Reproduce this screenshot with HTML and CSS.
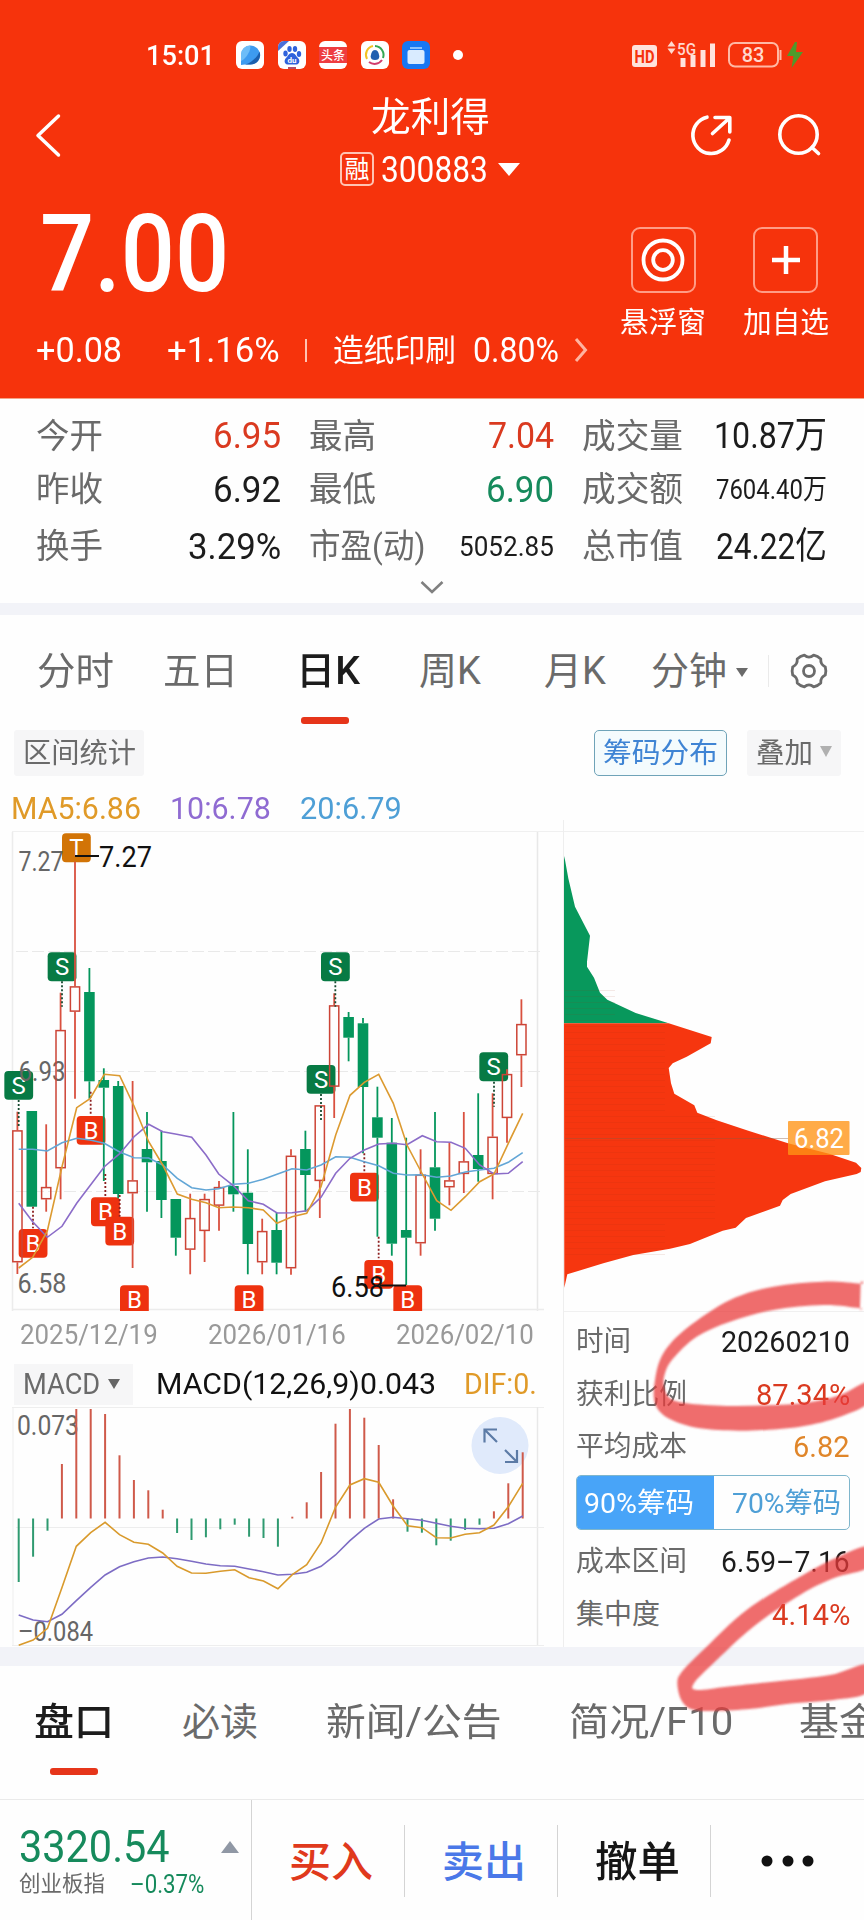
FILE: index.html
```html
<!DOCTYPE html>
<html lang="zh-CN">
<head>
<meta charset="utf-8">
<title>龙利得 300883</title>
<link rel="stylesheet" href="styles.css">
</head>
<body>
<header class="head">
  <div class="status">
    <span class="fit s-time" data-w="69">15:01</span>
    <div class="apps">
      <svg width="28" height="28" viewBox="0 0 28 28"><rect width="28" height="28" rx="6" fill="#fff"/><path d="M5 24V14a9.5 9.5 0 1 1 9.500 9.500H9z" fill="#3d9bf0"/><path d="M9 23.500C16 22 22 15 23.500 10.500A9.500 9.500 0 0 1 14.500 23.500z" fill="#1b5fae"/><path d="M5 20V13a9 9 0 0 1 9-8.500C16 8 10 18 5 20z" fill="#6dbdf8"/></svg>
      <svg width="28" height="28" viewBox="0 0 28 28"><rect width="28" height="28" rx="6" fill="#fff"/><path d="M0 10V6a6 6 0 0 1 6-6h5z" fill="#4a6fd8"/><g fill="#2f62dc"><ellipse cx="7.500" cy="12.500" rx="2.200" ry="3"/><ellipse cx="11.500" cy="8" rx="2.200" ry="3"/><ellipse cx="17" cy="8" rx="2.200" ry="3"/><ellipse cx="21" cy="13" rx="2.200" ry="3"/><path d="M14 12c3 0 4 3 6 5s2 6-1.500 6.500h-9C6 23 6 19 8 17s3-5 6-5z"/></g><text x="14" y="22" class="ic-du">du</text><path d="M10 26h8v2h-8z" fill="#b0506a"/></svg>
      <svg width="28" height="28" viewBox="0 0 28 28"><rect width="28" height="28" rx="6" fill="#fff"/><path d="M0 6h28v16H0z" fill="#ee3d40"/><text x="14" y="18.500" class="ic-tt">头条</text></svg>
      <svg width="28" height="28" viewBox="0 0 28 28"><rect width="28" height="28" rx="6" fill="#fff"/><g fill="none" stroke-width="2"><path d="M6 18a9 9 0 0 1 6-13" stroke="#f2c324"/><path d="M14 5a9 9 0 0 1 8 12" stroke="#35a853"/><path d="M21 19a9 9 0 0 1-13 2" stroke="#d23c6c"/></g><path d="M14 9c3 0 3.800 3 4.300 6.500 0 2.500-1.500 3.500-4.300 3.500s-4.300-1-4.300-3.500C10.200 12 11 9 14 9z" fill="#1f5fb0"/></svg>
      <svg width="28" height="28" viewBox="0 0 28 28"><rect width="28" height="28" rx="6" fill="#1877f2"/><path d="M8 6h12v2H8z" fill="#8cc0fb"/><rect x="5.500" y="9" width="17" height="14" rx="2" fill="#d9ebff"/></svg>
    </div>
    <i class="dot"></i>
    <svg class="signal" width="180" height="30" viewBox="630 40 180 30">
      <rect x="632" y="45" width="25" height="22" rx="3" fill="#ffe3dc"/><text x="644.500" y="62.500" class="ic-hd" textLength="20" lengthAdjust="spacingAndGlyphs">HD</text>
      <path d="M671.500 41l4 5.500h-8zM671.500 54l4-5.500h-8z" fill="#ffd9cf"/><text x="677" y="54.500" class="ic-5g" textLength="19" lengthAdjust="spacingAndGlyphs">5G</text>
      <path d="M680.500 58h5v9h-5zM690.500 55h5v12h-5zM700.500 50h5v17h-5zM710 43.500h5v23.500h-5z" fill="#ffe3dc"/>
      <rect x="729" y="43" width="49" height="23.500" rx="6" fill="none" stroke="#ffb9a5" stroke-width="2"/><path d="M780.500 50v10" stroke="#ffb9a5" stroke-width="2"/>
      <text x="753" y="62" class="ic-bat">83</text>
      <path d="M795 42l-8 14h6.500l-2 12L803 52h-7l1-10z" fill="#4d9a2c"/>
    </svg>
  </div>

  <div class="nav">
    <svg width="30" height="50" viewBox="33 110 30 50" fill="none" stroke="#fff" stroke-width="3.500" stroke-linecap="round" stroke-linejoin="round"><path d="M58.500 116L38 135.500 58.500 155"/></svg>
    <div class="title">
      <div class="name"><span class="fit" data-w="119">龙利得</span></div>
      <div class="code"><b class="rong">融</b><span class="fit" data-w="107">300883</span><i class="tri"></i></div>
    </div>
    <svg width="140" height="50" viewBox="685 110 140 50" fill="none" stroke="#fff" stroke-width="3.600" stroke-linecap="round" stroke-linejoin="round"><path d="M707 117.200A18.400 18.400 0 1 0 729 140"/><path d="M712.500 133.500l17-15.500M715 117.500h14.800v14.500"/><circle cx="798.500" cy="134.500" r="18.700"/><path d="M812 147.500l6.500 6"/></svg>
  </div>

  <div class="quote">
    <div>
      <div class="price"><span class="fit" data-w="189">7.00</span></div>
      <div class="change">
        <span class="fit n35" data-w="86">+0.08</span>
        <span class="fit n35" data-w="113">+1.16%</span>
        <i class="bar"></i>
        <span class="fit n31" data-w="123">造纸印刷</span>
        <span class="fit n35" data-w="86">0.80%</span>
        <svg width="16" height="26" viewBox="0 0 16 26" fill="none" stroke="#ffb3a0" stroke-width="3"><path d="M2 2l9.500 11L2 24"/></svg>
      </div>
    </div>
    <div class="act">
      <div class="box"><svg width="44" height="44" viewBox="0 0 44 44" fill="none" stroke="#fff" stroke-width="3.800"><circle cx="22" cy="22" r="19.500"/><circle cx="22" cy="22" r="9.800"/></svg></div>
      <span class="fit" data-w="86">悬浮窗</span>
    </div>
    <div class="act">
      <div class="box"><svg width="44" height="44" viewBox="0 0 44 44" stroke="#fff" stroke-width="4.500"><path d="M22 8v28M8 22h28"/></svg></div>
      <span class="fit" data-w="86">加自选</span>
    </div>
  </div>
</header>

<section class="stats">
  <div class="srow r1">
    <p><span class="fit k" data-w="67">今开</span><span class="fit v red" data-w="68">6.95</span></p>
    <p><span class="fit k" data-w="67">最高</span><span class="fit v red" data-w="66">7.04</span></p>
    <p><span class="fit k" data-w="101">成交量</span><span class="fit v" data-w="113">10.87万</span></p>
  </div>
  <div class="srow r2">
    <p><span class="fit k" data-w="67">昨收</span><span class="fit v" data-w="68">6.92</span></p>
    <p><span class="fit k" data-w="67">最低</span><span class="fit v green" data-w="68">6.90</span></p>
    <p><span class="fit k" data-w="101">成交额</span><span class="fit v sm" data-w="111">7604.40万</span></p>
  </div>
  <div class="srow r3">
    <p><span class="fit k" data-w="67">换手</span><span class="fit v" data-w="93">3.29%</span></p>
    <p><span class="fit k" data-w="116">市盈(动)</span><span class="fit v sm" data-w="95">5052.85</span></p>
    <p><span class="fit k" data-w="101">总市值</span><span class="fit v" data-w="111">24.22亿</span></p>
  </div>
  <div class="more"><svg width="26" height="16" viewBox="0 0 26 16" fill="none" stroke="#808080" stroke-width="2.600"><path d="M2.500 2L13 12 23.500 2"/></svg></div>
</section>

<nav class="ktabs">
  <span class="fit" data-w="77">分时</span>
  <span class="fit" data-w="75">五日</span>
  <span class="on"><span class="fit" data-w="64">日K</span></span>
  <span class="fit" data-w="62">周K</span>
  <span class="fit" data-w="62">月K</span>
  <span class="fit" data-w="76">分钟</span>
  <i class="tri grey"></i>
  <i class="vline"></i>
  <svg width="38" height="38" viewBox="0 0 38 38" fill="none" stroke="#6b6b6b" stroke-width="2.800" stroke-linejoin="round"><path d="M35.300 14.900Q36.400 19 35.300 23.100Q30.200 25.500 30.800 31Q27.800 34 23.700 34.800Q19 31 14.300 34.800Q10.200 34 7.200 31Q7.800 25.500 2.700 23.100Q1.600 19 2.700 14.900Q7.800 12.500 7.200 7Q10.200 4 14.300 3.200Q19 7 23.700 3.200Q27.800 4 30.800 7Q30.200 12.500 35.300 14.900Z"/><circle cx="19" cy="19" r="5.500"/></svg>
</nav>

<div class="tools">
  <span class="chip"><span class="fit" data-w="113">区间统计</span></span>
  <span class="chip blue"><span class="fit" data-w="115">筹码分布</span></span>
  <span class="chip add"><span class="fit" data-w="57">叠加</span><i class="tri pale"></i></span>
</div>
<div class="ma">
  <span class="fit m5" data-w="130">MA5:6.86</span>
  <span class="fit m10" data-w="101">10:6.78</span>
  <span class="fit m20" data-w="102">20:6.79</span>
</div>

<main class="charts">
  <div class="left">
    <svg id="kline" width="564" height="500" viewBox="0 820 564 500"></svg>
    <div class="dates"><span class="fit" data-w="138">2025/12/19</span><span class="fit" data-w="138">2026/01/16</span><span class="fit" data-w="138">2026/02/10</span></div>
    <div class="mhead"><span class="pick"><span class="fit" data-w="77">MACD</span><i class="tri dark"></i></span><span class="fit blk" data-w="280">MACD(12,26,9)0.043</span><span class="fit m5" data-w="73">DIF:0.</span></div>
    <svg id="macd" width="564" height="242" viewBox="0 1405 564 242"></svg>
  </div>
  <div class="right">
    <svg id="chips" width="300" height="495" viewBox="564 820 300 495"></svg>
    <div class="info">
      <p><span class="fit" data-w="55">时间</span><span class="fit ink" data-w="129">20260210</span></p>
      <p><span class="fit" data-w="111">获利比例</span><span class="fit red" data-w="94">87.34%</span></p>
      <p><span class="fit" data-w="111">平均成本</span><span class="fit gold" data-w="57">6.82</span></p>
      <div class="seg"><b><span class="fit" data-w="110">90%筹码</span></b><b><span class="fit" data-w="109">70%筹码</span></b></div>
      <p><span class="fit" data-w="111">成本区间</span><span class="fit ink" data-w="129">6.59–7.16</span></p>
      <p><span class="fit" data-w="84">集中度</span><span class="fit red" data-w="78">4.14%</span></p>
    </div>
  </div>
</main>

<nav class="btabs">
  <span class="on"><span class="fit" data-w="80">盘口</span></span>
  <span class="fit" data-w="76">必读</span>
  <span class="fit" data-w="176">新闻/公告</span>
  <span class="fit" data-w="164">简况/F10</span>
  <span class="fit" data-w="80">基金</span>
</nav>

<footer class="foot">
  <div class="index">
    <div class="top"><span class="fit" data-w="151">3320.54</span><i class="tri up"></i></div>
    <div class="sub"><span class="fit" data-w="86">创业板指</span><span class="fit green" data-w="74">–0.37%</span></div>
  </div>
  <div class="btn red"><span class="fit" data-w="84">买入</span></div>
  <div class="btn sell"><span class="fit" data-w="84">卖出</span></div>
  <div class="btn"><span class="fit" data-w="85">撤单</span></div>
  <div class="btn dots"><svg width="54" height="12" viewBox="0 0 54 12" fill="#111"><circle cx="6" cy="6" r="5.500"/><circle cx="27" cy="6" r="5.500"/><circle cx="47" cy="6" r="5.500"/></svg></div>
</footer>

<svg id="marks" class="marks" width="864" height="450" viewBox="0 1270 864 450"></svg>
<script src="app.js"></script>
</body>
</html>
```
FILE: styles.css
```css
* { box-sizing: border-box; }
body { margin: 0; width: 864px; height: 1920px; overflow: hidden; position: relative; background: #fefefe; color: #6a6a6a; font-family: Roboto, "Noto Sans CJK SC", sans-serif; line-height: 1; }
p { margin: 0; }
svg { display: block; flex: none; }
.fit { display: inline-block; white-space: nowrap; flex: none; }
.fit > span { display: inline-block; transform-origin: 0 50%; }
.tri { width: 0; height: 0; border: 11px solid transparent; border-top: 13px solid #fff; border-bottom: 0; }
.red { color: #da3a20; }
.green { color: #168a5c; }
.ink { color: #1c1c1c; }
.gold { color: #e0862a; }

.head { height: 399px; background: #f6330c; color: #fff; border-bottom: 1px solid #f4a488; }
.status { height: 75px; padding: 35px 0 0 146px; display: flex; align-items: center; }
.s-time { font-size: 28px; font-weight: 500; padding-top: 2px; }
.apps { display: flex; gap: 13.500px; margin-left: 21px; }
.dot { width: 10px; height: 10px; border-radius: 5px; background: #fff; margin-left: 23px; }
.signal { margin-left: 167px; }
.ic-du { font: 700 8px Roboto; fill: #fff; text-anchor: middle; }
.ic-tt { font: 500 12px "Noto Sans CJK SC"; fill: #fff; text-anchor: middle; }
.ic-hd { font: 700 18px Roboto; fill: #f6330c; text-anchor: middle; }
.ic-5g { font: 500 17px Roboto; fill: #ffd9cf; }
.ic-bat { font: 500 20px Roboto; fill: #ffd9cf; text-anchor: middle; }

.nav { height: 120px; padding: 0 39px 0 33px; display: grid; grid-template-columns: 30px 1fr 140px; align-items: center; }
.title { height: 120px; padding: 23px 0 0 112px; text-align: center; }
.name { font-size: 40px; height: 40px; padding-left: 1px; }
.code { margin-top: 14px; height: 34px; display: flex; align-items: center; justify-content: center; font-size: 37px; }
.rong { width: 34px; height: 34px; border: 2px solid #ffc3b3; border-radius: 5px; font-size: 25px; line-height: 31px; font-weight: 400; margin-right: 7px; }
.code .tri { margin-left: 10px; }

.quote { height: 203px; display: grid; grid-template-columns: 609px 108px 137px; }
.price { margin: 22px 0 0 40px; height: 76px; font-size: 107px; line-height: 76px; font-weight: 500; }
.change { margin-top: 37px; height: 40px; padding-left: 36px; display: flex; align-items: center; }
.n35 { font-size: 35px; }
.n31 { font-size: 31px; }
.change > :nth-child(2) { margin-left: 45px; }
.bar { width: 2px; height: 23px; background: #ffc3b3; margin-left: 25px; }
.change > :nth-child(4) { margin-left: 26px; }
.change > :nth-child(5) { margin-left: 17px; }
.change > svg { margin-left: 15px; }
.act { padding-top: 32px; display: flex; flex-direction: column; align-items: center; font-size: 29px; }
.box { width: 65px; height: 66px; border: 2px solid #ff9c86; border-radius: 9px; display: flex; align-items: center; justify-content: center; margin-bottom: 16px; }

.stats { height: 204px; padding: 9px 37px 0 36px; background: #fefefe; }
.srow { display: grid; grid-template-columns: repeat(3, 245px); gap: 28px; }
.srow p { display: flex; justify-content: space-between; align-items: center; }
.r1 { height: 55px; }
.r2 { height: 52px; }
.r3 { height: 62px; }
.k { font-size: 34px; }
.v { font-size: 37px; }
.v:not(.red):not(.green) { color: #1c1c1c; }
.v.sm { font-size: 28px; padding-top: 2px; }
.more { height: 26px; padding-top: 3px; display: flex; justify-content: center; }

.ktabs { height: 127px; border-top: 12px solid #f2f3f8; padding: 0 0 4px 37px; display: grid; grid-template-columns: 126px 133px 123px 125px 107px 85px 32px 22px 1fr; align-items: center; font-size: 38px; }
.on { color: #1c1c1c; font-weight: 500; position: relative; display: block; }
.on::after { content: ""; position: absolute; left: 5px; top: 65px; width: 48px; height: 7px; border-radius: 3px; background: #e6351a; }
.tri.grey { border-width: 9px 6px 0; border-top-color: #6a6a6a; margin-top: 4px; }
.vline { width: 1px; height: 32px; background: #eaeaea; }

.tools { height: 46px; padding-left: 14px; display: flex; font-size: 28px; }
.chip { height: 46px; width: 130px; padding-top: 1px; background: #f6f6f7; display: flex; align-items: center; justify-content: center; border-radius: 3px; }
.blue { width: 133px; margin-left: 450px; color: #3f84d4; background: #f4fbfd; border: 1.500px solid #6fa3b8; border-radius: 5px; }
.add { width: 94px; margin-left: 20px; }
.tri.pale { border-width: 11px 6.500px 0; border-top-color: #b0b0b0; margin-left: 7px; margin-top: -4px; }
.ma { height: 44px; padding: 20px 0 0 11px; display: flex; align-items: center; font-size: 31px; gap: 29px; }
.m5 { color: #e09a28; }
.m10 { color: #8f6bd2; }
.m20 { color: #4e9fd6; }

.charts { display: grid; grid-template-columns: 563px 301px; height: 827px; }
.right { border-left: 1px solid #eee; }
.dates { height: 30px; padding: 1px 0 0 20px; display: flex; align-items: center; gap: 50px; font-size: 27px; color: #999; }
.mhead { height: 45px; margin-top: 10px; padding: 3px 0 0 14px; display: flex; align-items: center; font-size: 29px; }
.pick { width: 119px; height: 41px; background: #f6f6f7; display: flex; align-items: center; padding-left: 9px; }
.tri.dark { border-width: 10px 6.500px 0; border-top-color: #666; margin-left: 8px; }
.mhead > .blk { color: #111; margin-left: 23px; }
.mhead > .m5 { margin-left: 28px; }
.axis { font-size: 27px; fill: #666; }
.lead { font-size: 29px; fill: #111; }
.sig { font-size: 24px; fill: #fff; text-anchor: middle; }
.avg { font-size: 28px; fill: #fff; }

.info { padding: 1px 14px 0 12px; font-size: 28px; }
.info p { height: 53px; display: flex; align-items: center; justify-content: space-between; }
.info .ink, .info .red, .info .gold { font-size: 30px; }
.info p:first-child, .info p:nth-child(3) { height: 52px; }
.seg { margin: 2px 0 5px; height: 55px; border: 1px solid #7fb6cc; border-radius: 5px; overflow: hidden; display: grid; grid-template-columns: 137px 1fr; color: #4e9fd6; }
.seg b { display: flex; align-items: center; justify-content: center; font-weight: 400; padding: 2px 0 0 10px; }
.seg b:first-child { background: #48a4f8; color: #fff; padding: 2px 13px 0 0; }

.btabs { height: 152px; border-top: 19px solid #f2f3f8; padding: 0 0 22px 34px; display: grid; grid-template-columns: 148px 144px 243px 230px 80px; align-items: center; font-size: 38px; overflow: hidden; }
.btabs .on::after { left: 16px; top: 65px; }

.foot { height: 121px; border-top: 1px solid #eaeaea; display: grid; grid-template-columns: 252px 153px 153px 153px 153px; }
.index { border-right: 1px solid #d4d4d4; padding-left: 19px; }
.top { height: 34px; margin-top: 30px; font-size: 45px; line-height: 34px; color: #168a5c; display: flex; align-items: center; }
.tri.up { border: 9px solid transparent; border-bottom: 12px solid #9098a5; border-top: 0; margin-left: 51px; }
.sub { margin-top: 7px; height: 26px; font-size: 22px; display: flex; align-items: center; gap: 25px; }
.sub .green { font-size: 25px; }
.btn { height: 72px; margin-top: 25px; padding: 4px 0 0 6px; display: flex; align-items: center; justify-content: center; font-size: 42px; font-weight: 500; color: #161616; border-right: 1px solid #d4d4d4; }
.btn.dots { border: 0; padding: 0; }
.btn.red { color: #e0391c; }
.btn.sell { color: #4a78e8; }
.marks { position: absolute; left: 0; top: 1270px; }
```
FILE: app.js
```js
// Condense each label to its column width.
document.querySelectorAll('.fit').forEach(function (el) {
  var inner = document.createElement('span');
  inner.textContent = el.textContent;
  el.textContent = '';
  el.appendChild(inner);
  var w = +el.dataset.w, n = inner.offsetWidth;
  el.style.width = w + 'px';
  inner.style.transform = 'scaleX(' + w / n + ')';
});

var RED = '#d9503f', GREEN = '#04965c';
function line(x1, y1, x2, y2, c, extra) {
  return '<path d="M' + x1 + ' ' + y1 + 'L' + x2 + ' ' + y2 + '" stroke="' + c + '" fill="none" ' + (extra || '') + '/>';
}
function poly(pts, c, w) {
  return '<polyline points="' + pts.join(' ') + '" fill="none" stroke="' + c + '" stroke-width="' + w + '"/>';
}
function text(cls, x, y, len, s) {
  return '<text class="' + cls + '" x="' + x + '" y="' + y + '" textLength="' + len + '" lengthAdjust="spacingAndGlyphs">' + s + '</text>';
}
function third(a, ox, oy) {
  var r = [];
  for (var i = 0; i < a.length; i += 2) r.push((a[i] / 3 + ox).toFixed(1) + ',' + (a[i + 1] / 3 + oy).toFixed(1));
  return r;
}

// Candlesticks: direction, high, body top, body bottom, low (units of 1/3 px)
var K = [
  [1,875,931,1327,1362],[0,873,873,1160,1160],[1,913,1101,1138,1175],[1,518,630,1045,1138],[1,125,499,575,836],[0,444,516,784,836],
  [0,745,780,803,1083],[0,783,798,1122,1135],[1,783,1081,1120,1344],[0,876,987,1027,1175],[0,932,1023,1140,1194],[0,1137,1137,1253,1307],
  [1,1121,1194,1289,1363],[1,1121,1137,1233,1326],[1,1083,1101,1157,1232],[0,876,1098,1123,1175],[0,988,1118,1272,1363],[1,1196,1233,1327,1363],
  [0,1178,1230,1328,1363],[1,988,1007,1345,1364],[0,932,987,1065,1175],[1,856,856,1083,1194],[1,520,556,800,894],[0,576,591,653,724],
  [0,594,610,801,1000],[0,800,892,953,1250],[0,894,968,1271,1307],[0,953,1230,1253,1395],[1,988,1064,1270,1307],[0,876,1042,1196,1232],
  [1,967,1081,1102,1156],[1,876,1024,1062,1119],[0,820,1005,1047,1085],[1,820,950,1062,1138],[1,748,762,894,968],[1,538,612,706,801]
];
var S = [['S',13,753],['S',143,397],['T',186,40],['B',230,888],['B',56,1227],['B',273,1132],['B',316,1190],['B',360,1396],['B',704,1396],
  ['S',963,397],['S',920,735],['S',1438,697],['B',1050,1058],['B',1093,1320],['B',1180,1396]];
var D = [[56,840,920,0],[186,484,560,0],[1006,484,560,0],[963,822,900,0],[1482,785,860,0],[272,815,885,1],[99,1160,1225,1],[316,1062,1130,1],[359,1125,1190,1],[1093,1000,1055,1],[1136,1250,1315,1]];
var M5 = [56,1344,98,1312,142,1233,186,1040,230,863,270,836,313,763,359,767,402,858,446,965,488,1035,532,1122,575,1138,618,1148,656,1163,700,1161,745,1163,790,1170,831,1210,876,1190,920,1180,963,1100,1007,945,1050,826,1093,787,1136,763,1180,850,1221,975,1267,1062,1310,1142,1353,1171,1396,1130,1439,1085,1482,1062,1525,970,1568,880];
var M10 = [56,1150,98,1205,142,1252,186,1219,230,1150,313,1040,359,1001,402,950,446,913,488,935,530,943,575,952,618,1005,656,1062,700,1097,745,1142,790,1153,831,1179,876,1178,920,1172,963,1132,1007,1060,1050,1015,1093,990,1136,972,1180,970,1221,974,1267,947,1310,965,1353,967,1396,985,1439,1035,1482,1062,1525,1060,1568,1025];
var M20 = [56,988,98,988,142,993,186,968,230,955,270,960,313,970,359,996,402,1013,446,1014,488,1035,532,1075,575,1103,618,1110,656,1106,700,1093,745,1090,790,1078,831,1063,876,1046,920,1050,963,1035,1007,1010,1050,1012,1093,1025,1136,1037,1180,1060,1221,1065,1267,1064,1310,1072,1353,1068,1396,1056,1439,1050,1482,1045,1525,1027,1568,998];

var h = '<defs><clipPath id="kc"><rect x="0" y="820" width="564" height="491"/></clipPath></defs>';
h += line(12, 831.5, 564, 831.5, '#f0f0f0') + line(12.5, 832, 12.5, 1311, '#ececec', 'stroke-width="1.5"') + line(537.5, 832, 537.5, 1311, '#e8e8e8', 'stroke-width="1.5"') + line(12, 1309.5, 544, 1309.5, '#ececec', 'stroke-width="1.5"');
[951, 1071, 1191].forEach(function (y) { h += line(16, y + .5, 544, y + .5, '#e9e9e9', 'stroke-dasharray="12 4"'); });
h += '<g clip-path="url(#kc)">';
S.forEach(function (s) {
  var x = s[1] / 3, y = s[2] / 3 + 820;
  h += '<rect x="' + x + '" y="' + y + '" width="28.8" height="28.8" rx="4" fill="' + { S: '#077a44', T: '#d27406', B: '#ee320f' }[s[0]] + '"/><text class="sig" x="' + (x + 14.4) + '" y="' + (y + 23) + '">' + s[0] + '</text>';
});
h += '</g>';
h += text('axis', 18.5, 871, 45, '7.27') + text('axis', 18.5, 1081, 47, '6.93') + text('axis', 17.5, 1293, 49, '6.58');
K.forEach(function (k, i) {
  var x = +(17.4 + 14.4 * i).toFixed(1), c = k[0] ? RED : GREEN, y = k.slice(1).map(function (v) { return +(v / 3 + 820).toFixed(1); });
  h += line(x, y[0], x, y[1], c, 'stroke-width="1.8"') + line(x, y[2], x, y[3], c, 'stroke-width="1.8"');
  h += k[0] ? '<rect x="' + (x - 4.6) + '" y="' + (y[1] + .6) + '" width="9.2" height="' + (y[2] - y[1] - 1.2) + '" fill="none" stroke="#cc4436" stroke-width="1.5"/>'
    : '<rect x="' + (x - 5.3) + '" y="' + y[1] + '" width="10.6" height="' + (y[2] - y[1]) + '" fill="' + c + '"/>';
});
D.forEach(function (d) { h += line(d[0] / 3, d[1] / 3 + 820, d[0] / 3, d[2] / 3 + 820, d[3] ? '#8c1f1f' : '#174a30', 'stroke-width="1.8" stroke-dasharray="2 2"'); });
h += poly(third(M20, 0, 820), '#62a6d6', 1.6) + poly(third(M10, 0, 820), '#8b6cc8', 1.6) + poly(third(M5, 0, 820), '#dc9a30', 1.6);
h += line(75, 856, 99, 856, '#111', 'stroke-width="2"') + text('lead', 99, 867, 53, '7.27');
h += line(380, 1285.5, 406, 1285.5, '#111', 'stroke-width="2"') + text('lead', 331, 1297, 53, '6.58');
document.getElementById('kline').innerHTML = h;

// MACD histogram, DIF and DEA
var BARS = [816,740,662,462,297,297,312,436,510,541,599,669,690,682,658,644,680,684,710,620,577,486,341,297,323,405,568,665,668,706,692,660,644,604,520,427];
var DIF = [1006,990,955,833,709,668,637,674,697,703,729,769,789,790,784,779,803,813,836,794,764,698,592,525,506,517,588,647,653,683,684,673,668,645,590,520];
var DEA = [915,930,935,913,872,832,795,770,755,744,741,746,754,762,767,769,777,785,795,793,787,769,735,692,655,627,622,626,631,640,649,655,656,655,641,618];
function px(i) { return (18.7 + 14.4 * i).toFixed(1); }
function ser(a) { return a.map(function (v, i) { return px(i) + ',' + (v / 3 + 1310).toFixed(1); }); }
h = line(12, 1407.5, 544, 1407.5, '#eee') + line(13, 1407, 13, 1646, '#eee') + line(537.5, 1407, 537.5, 1646, '#e8e8e8', 'stroke-width="1.5"') + line(12, 1645.5, 544, 1645.5, '#eee') + line(16, 1527.5, 544, 1527.5, '#ededed');
h += '<circle cx="500" cy="1445.5" r="28.5" fill="#e0eafb"/><path d="M497 1429.500H484.500V1442.500M484.500 1429.500L497 1442M505 1462H517V1450M517 1462L505 1450" stroke="#5c7ba6" stroke-width="2.200" fill="none"/>';
h += text('axis', 17, 1434.5, 62, '0.073') + text('axis', 18, 1640.5, 75, '–0.084');
BARS.forEach(function (v, i) { h += line(px(i), 1518.5, px(i), (v / 3 + 1310).toFixed(1), v < 625 ? '#cf5a4a' : '#2f9a70', 'stroke-width="2"'); });
h += poly(ser(DEA), '#7d6cc4', 1.6) + poly(ser(DIF), '#d99a2c', 1.6);
document.getElementById('macd').innerHTML = h;

// Cost distribution
var CG = [72,108,75,120,85,175,105,260,150,347,141,425,141,440,162,473,180,518,202,539,287,579,386,610,72,610];
var CR = [72,610,386,610,515,651,512,670,440,710,398,730,386,744,393,790,403,821,463,856,472,878,530,901,625,932,744,970,870,1002,948,1028,964,1044,962,1056,950,1062,855,1084,752,1122,728,1140,720,1157,618,1194,587,1223,548,1232,450,1272,390,1286,280,1305,190,1330,82,1363,73,1403];
h = '<path d="M563 820h2v11h-2z" fill="#fefefe"/>' + line(564, 831.5, 864, 831.5, '#f0f0f0') + line(564, 1311.5, 864, 1311.5, '#f0f0f0');
h += '<polygon points="' + third(CG, 540, 820).join(' ') + '" fill="#08985c"/><polygon points="' + third(CR, 540, 820).join(' ') + '" fill="#f6360f"/>';
for (var y = 990; y < 1260; y += 6) h += '<rect x="565" y="' + y + '" width="' + (y < 1023 ? 50 : y < 1115 ? 100 : y < 1220 ? 150 : 100) + '" height="1" fill="#a03010" opacity=".1"/>';
h += line(565, 1138.5, 788, 1138.5, '#8d5a40', 'opacity=".4"');
h += '<rect x="788" y="1121" width="61.500" height="34" rx="1" fill="#ff9314" opacity=".78"/>' + text('avg', 794, 1147.5, 50, '6.82');
document.getElementById('chips').innerHTML = h;

// Hand-drawn highlighter loops: closed Catmull-Rom outlines
function smooth(a) {
  var p = [], n, d;
  for (var i = 0; i < a.length; i += 2) p.push([a[i] / 3 + 540, a[i + 1] / 3 + 1270]);
  n = p.length; d = 'M' + p[0];
  for (i = 0; i < n; i++) {
    var q0 = p[(i + n - 1) % n], q1 = p[i], q2 = p[(i + 1) % n], q3 = p[(i + 2) % n];
    d += 'C' + [q1[0] + (q2[0] - q0[0]) / 6, q1[1] + (q2[1] - q0[1]) / 6, q2[0] - (q3[0] - q1[0]) / 6, q2[1] - (q3[1] - q1[1]) / 6, q2[0], q2[1]];
  }
  return d + 'Z';
}
var A = [962,39,962,41,850,35,700,50,570,90,440,175,370,250,345,330,345,400,385,445,480,475,620,482,780,470,900,440,985,398,985,336,900,375,800,398,680,406,560,408,440,400,390,385,372,350,375,310,400,265,470,200,570,155,700,120,850,105,958,114,960,113];
var B = [985,830,900,858,780,920,620,1020,500,1130,430,1200,412,1240,430,1300,480,1322,620,1318,760,1300,880,1290,985,1266,985,1184,870,1215,700,1235,560,1250,470,1260,462,1240,520,1180,640,1070,780,975,880,925,985,892];
document.getElementById('marks').innerHTML = '<defs><filter id="soft" x="-5%" y="-5%" width="110%" height="110%"><feGaussianBlur stdDeviation="1.100"/></filter></defs><g fill="#ea3a3c" fill-opacity=".74" filter="url(#soft)"><path d="' + smooth(A) + '"/><path d="' + smooth(B) + '"/></g>';
```
